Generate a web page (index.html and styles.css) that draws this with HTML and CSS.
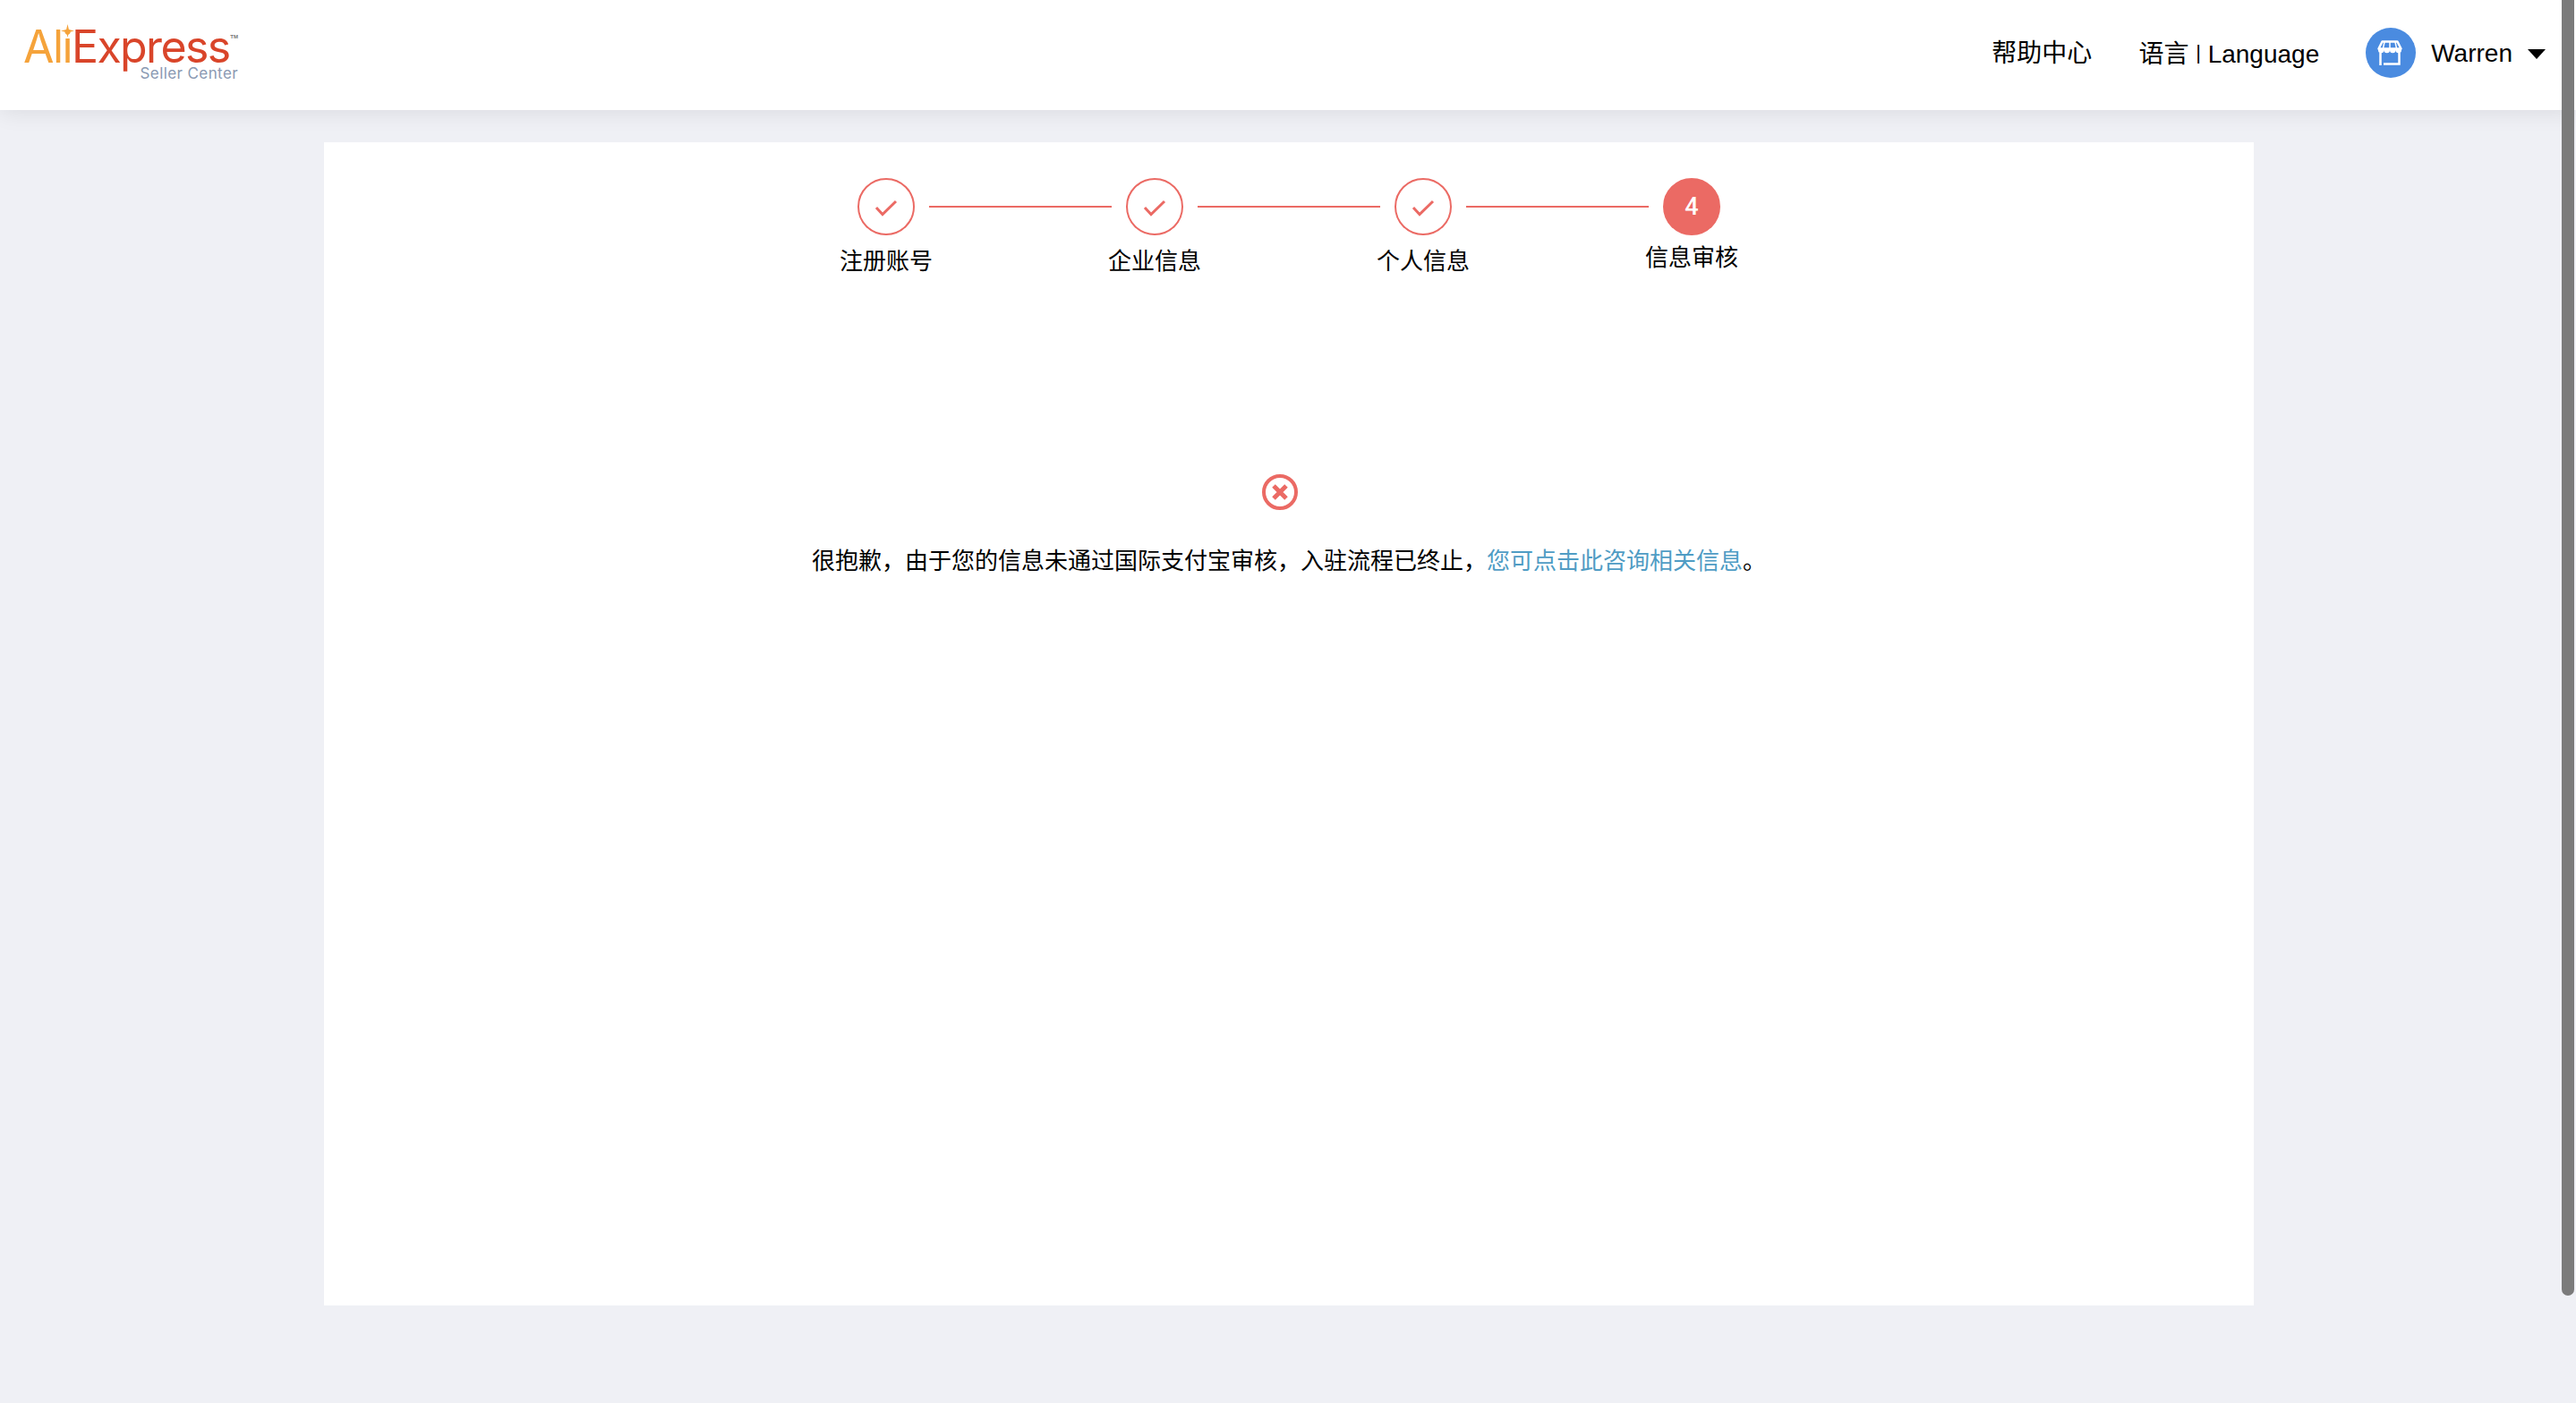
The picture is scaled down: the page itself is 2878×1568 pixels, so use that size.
FILE: index.html
```html
<!DOCTYPE html>
<html lang="zh-CN">
<head>
    <meta charset="UTF-8">
    <meta name="viewport" content="width=device-width, initial-scale=1.0">
    <title>AliExpress Seller Center</title>
    <link rel="stylesheet" href="styles.css">
</head>
<body>
    <div class="header">
        <a class="logo" href="#">
            <span class="logo-main"><span class="logo-ali">Ali</span><span class="logo-express">Express</span></span>
            <span class="logo-sub">Seller Center</span>
            <svg class="logo-star" width="15" height="15" viewBox="0 0 16 16"><path d="M8 0 L9.500 6.500 L16 8 L9.500 9.500 L8 16 L6.500 9.500 L0 8 L6.500 6.500 Z" fill="#f5a33b"/></svg>
            <span class="logo-tm">TM</span>
        </a>
        <div class="header-right">
            <a class="header-link" href="#">帮助中心</a>
            <a class="header-link" href="#">语言 <span class="sep">|</span> Language</a>
            <div class="user">
                <div class="avatar">
                    <svg width="56" height="56" viewBox="0 0 56 56">
                        <path d="M18.500 15.500 H35.500 L39.500 23.500 H14.500 Z" fill="none" stroke="#fff" stroke-width="2.500" stroke-linejoin="round"/>
                        <path d="M14 23 H40 V25 A3.250 3.250 0 0 1 33.500 25 A3.250 3.250 0 0 1 27 25 A3.250 3.250 0 0 1 20.500 25 A3.250 3.250 0 0 1 14 25 Z" fill="#fff"/>
                        <path d="M21 16 L19.500 23 M27 16 V23 M33 16 L34.500 23" fill="none" stroke="#fff" stroke-width="1.500"/>
                        <path d="M16.500 28 V42 M20 40.500 H37.500 V28" fill="none" stroke="#fff" stroke-width="2.500"/>
                    </svg>
                </div>
                <span class="user-name">Warren</span>
                <span class="caret"></span>
            </div>
        </div>
    </div>

    <div class="card">
        <div class="steps">
            <div class="step">
                <div class="step-circle"><svg width="64" height="64" viewBox="0 0 64 64"><path d="M21 33 L28 40.500 L43 26" fill="none" stroke="#eb6a64" stroke-width="3"/></svg></div>
                <div class="step-label">注册账号</div>
            </div>
            <div class="step-line"></div>
            <div class="step">
                <div class="step-circle"><svg width="64" height="64" viewBox="0 0 64 64"><path d="M21 33 L28 40.500 L43 26" fill="none" stroke="#eb6a64" stroke-width="3"/></svg></div>
                <div class="step-label">企业信息</div>
            </div>
            <div class="step-line"></div>
            <div class="step">
                <div class="step-circle"><svg width="64" height="64" viewBox="0 0 64 64"><path d="M21 33 L28 40.500 L43 26" fill="none" stroke="#eb6a64" stroke-width="3"/></svg></div>
                <div class="step-label">个人信息</div>
            </div>
            <div class="step-line"></div>
            <div class="step current">
                <div class="step-circle">4</div>
                <div class="step-label">信息审核</div>
            </div>
        </div>

        <div class="result">
            <svg class="result-icon" width="40" height="40" viewBox="0 0 40 40">
                <circle cx="20" cy="20" r="18" fill="none" stroke="#eb6a64" stroke-width="4"/>
                <path d="M13 13 L27 27 M27 13 L13 27" fill="none" stroke="#eb6a64" stroke-width="5"/>
            </svg>
            <p class="result-text">很抱歉，由于您的信息未通过国际支付宝审核，入驻流程已终止，<a href="#">您可点击此咨询相关信息</a>。</p>
        </div>
    </div>

    <div class="scrollbar"></div>
</body>
</html>
```

FILE: styles.css
```css
html, body {
    height: 100%;
    overflow: hidden;
}
body {
    font-family: "Liberation Sans", "Noto Sans CJK SC", sans-serif;
    background-color: #eff0f5;
    color: #000;
    margin: 0;
}
a {
    text-decoration: none;
    color: inherit;
}

.header {
    height: 118px;
    background: white;
    box-shadow: 0 2px 24px rgba(0,0,0,0.09);
    display: flex;
    align-items: center;
    justify-content: space-between;
    padding: 0 34px 5px 26px;
    position: relative;
}
.logo {
    position: relative;
    display: flex;
    flex-direction: column;
    width: 240px;
    margin-top: -2px;
}
.logo-main {
    font-family: Inter, sans-serif;
    font-size: 50px;
    line-height: 52px;
    letter-spacing: -1.6px;
}
.logo-ali { color: #f5a33b; }
.logo-express { color: #d9452a; }
.logo-sub {
    align-self: flex-end;
    font-family: Inter, sans-serif;
    font-size: 17px;
    line-height: 16px;
    letter-spacing: 0.4px;
    color: #8a99b2;
    margin: -4px 0 0;
}
.logo-star {
    position: absolute;
    left: 42px;
    top: 1px;
}
.logo-tm {
    position: absolute;
    right: 0;
    top: 12px;
    font-size: 6px;
    font-weight: bold;
    color: #777;
}

.header-right {
    display: flex;
    align-items: center;
    gap: 52px;
}
.header-link {
    font-size: 28px;
    line-height: 36px;
    margin-top: 1px;
}
.sep {
    font-size: 22px;
    vertical-align: 4px;
}
.user {
    display: flex;
    align-items: center;
}
.avatar {
    width: 56px;
    height: 56px;
    border-radius: 50%;
    background-color: #4a8be0;
    margin-right: 17px;
}
.avatar svg { display: block; }
.user-name {
    font-size: 28px;
    margin-top: 1px;
    margin-right: 17px;
}
.caret {
    width: 0;
    height: 0;
    border-left: 10px solid transparent;
    border-right: 10px solid transparent;
    border-top: 11px solid #000;
    margin-top: 2px;
}

.card {
    background: white;
    width: 2156px;
    height: 1300px;
    margin: 36px 0 0 362px;
}

.steps {
    display: flex;
    justify-content: center;
    padding-top: 40px;
}
.step {
    width: 64px;
    display: flex;
    flex-direction: column;
    align-items: center;
}
.step-circle {
    width: 64px;
    height: 64px;
    box-sizing: border-box;
    border: 2px solid #eb6a64;
    border-radius: 50%;
    display: flex;
    align-items: center;
    justify-content: center;
    flex-shrink: 0;
}
.step-circle svg {
    margin: -2px;
    flex-shrink: 0;
}
.step-label {
    font-size: 26px;
    line-height: 36px;
    margin-top: 11px;
    white-space: nowrap;
}
.step-line {
    width: 204px;
    height: 2px;
    background-color: #eb6a64;
    margin: 31px 16px 0;
}
.step.current .step-circle {
    background-color: #eb6a64;
    color: white;
    font-family: Roboto, sans-serif;
    font-size: 27px;
    font-weight: 500;
}
.step.current .step-label {
    margin-top: 7px;
}

.result {
    display: flex;
    flex-direction: column;
    align-items: center;
    margin-top: 220px;
}
.result-icon {
    margin-right: 20px;
}
.result-text {
    font-size: 26px;
    line-height: 36px;
    margin: 39px 0 0;
}
.result-text a {
    color: #4f9cc4;
}

/* overlay scrollbar */
.scrollbar {
    position: fixed;
    top: 0;
    right: 2px;
    width: 14px;
    height: 1448px;
    background-color: #7b7b7b;
    border-radius: 0 0 7px 7px;
}
```
